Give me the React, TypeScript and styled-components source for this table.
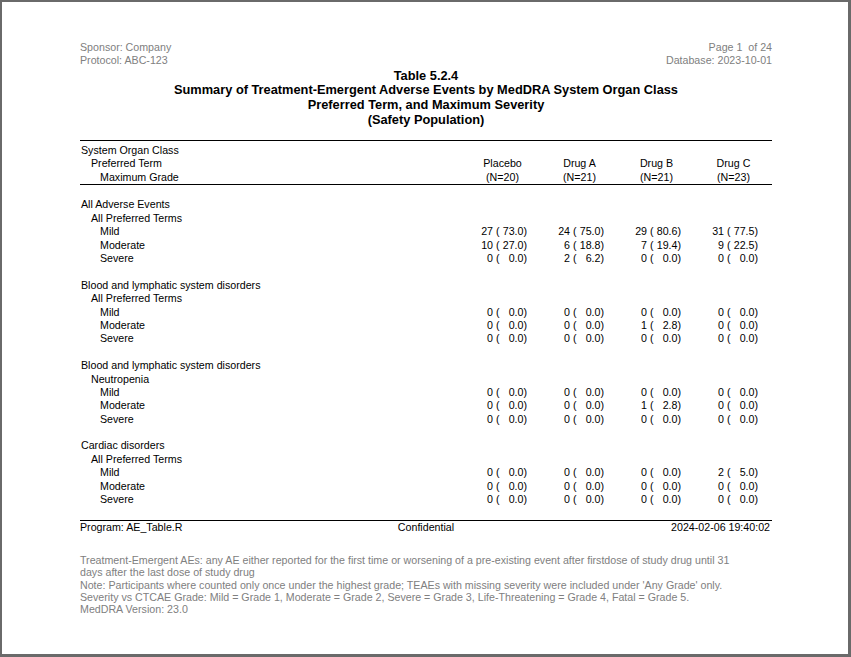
import styled, { createGlobalStyle } from "styled-components";

type Cell = [number, number];

interface GradeRow {
  grade: string;
  values: Cell[];
}

interface Group {
  soc: string;
  term: string;
  rows: GradeRow[];
}

const arms = [
  { name: "Placebo", n: 20 },
  { name: "Drug A", n: 21 },
  { name: "Drug B", n: 21 },
  { name: "Drug C", n: 23 },
];

const z: Cell = [0, 0];

const groups: Group[] = [
  {
    soc: "All Adverse Events",
    term: "All Preferred Terms",
    rows: [
      { grade: "Mild", values: [[27, 73.0], [24, 75.0], [29, 80.6], [31, 77.5]] },
      { grade: "Moderate", values: [[10, 27.0], [6, 18.8], [7, 19.4], [9, 22.5]] },
      { grade: "Severe", values: [z, [2, 6.2], z, z] },
    ],
  },
  {
    soc: "Blood and lymphatic system disorders",
    term: "All Preferred Terms",
    rows: [
      { grade: "Mild", values: [z, z, z, z] },
      { grade: "Moderate", values: [z, z, [1, 2.8], z] },
      { grade: "Severe", values: [z, z, z, z] },
    ],
  },
  {
    soc: "Blood and lymphatic system disorders",
    term: "Neutropenia",
    rows: [
      { grade: "Mild", values: [z, z, z, z] },
      { grade: "Moderate", values: [z, z, [1, 2.8], z] },
      { grade: "Severe", values: [z, z, z, z] },
    ],
  },
  {
    soc: "Cardiac disorders",
    term: "All Preferred Terms",
    rows: [
      { grade: "Mild", values: [z, z, z, [2, 5.0]] },
      { grade: "Moderate", values: [z, z, z, z] },
      { grade: "Severe", values: [z, z, z, z] },
    ],
  },
];

const footnotes = [
  "Treatment-Emergent AEs: any AE either reported for the first time or worsening of a pre-existing event after firstdose of study drug until 31 days after the last dose of study drug",
  "Note: Participants where counted only once under the highest grade; TEAEs with missing severity were included under 'Any Grade' only.",
  "Severity vs CTCAE Grade: Mild = Grade 1, Moderate = Grade 2, Severe = Grade 3, Life-Threatening = Grade 4, Fatal = Grade 5.",
  "MedDRA Version: 23.0",
];

// indent per level in the first column
const indents = [1, 11, 20];

const App = () => {
  return (
    <>
      <GlobalStyle />
      <Page>
        <TopBar>
          <div>
            <div>Sponsor: Company</div>
            <div>Protocol: ABC-123</div>
          </div>
          <RightText>
            <div>Page 1  of 24</div>
            <div>Database: 2023-10-01</div>
          </RightText>
        </TopBar>

        <Title>
          <div>Table 5.2.4</div>
          <div>Summary of Treatment-Emergent Adverse Events by MedDRA System Organ Class</div>
          <div>Preferred Term, and Maximum Severity</div>
          <div>(Safety Population)</div>
        </Title>

        <Table>
          <HeadRow>
            <HeadLabels>
              <Label $level={0}>System Organ Class</Label>
              <Label $level={1}>Preferred Term</Label>
              <Label $level={2}>Maximum Grade</Label>
            </HeadLabels>
            {arms.map((arm) => (
              <ArmHead key={arm.name}>
                <div>{arm.name}</div>
                <div>(N={arm.n})</div>
              </ArmHead>
            ))}
          </HeadRow>

          <Body>
            <Blank />
            {groups.map((g, gi) => (
              <div key={gi}>
                {gi > 0 && <Blank />}
                <Row>
                  <Label $level={0}>{g.soc}</Label>
                </Row>
                <Row>
                  <Label $level={1}>{g.term}</Label>
                </Row>
                {g.rows.map((r) => (
                  <Row key={r.grade}>
                    <Label $level={2}>{r.grade}</Label>
                    {r.values.map(([n, pct], i) => (
                      <Value key={i}>
                        <Count>{n}</Count>
                        <span> (</span>
                        <Pct>{pct.toFixed(1)}</Pct>
                        <span>)</span>
                      </Value>
                    ))}
                  </Row>
                ))}
              </div>
            ))}
            <Blank />
          </Body>

          <FootRow>
            <span>Program: AE_Table.R</span>
            <span>Confidential</span>
            <Stamp>2024-02-06 19:40:02</Stamp>
          </FootRow>
        </Table>

        <Notes>
          {footnotes.map((f) => (
            <div key={f}>{f}</div>
          ))}
        </Notes>
      </Page>
    </>
  );
};

export default App;

const GlobalStyle = createGlobalStyle`
html, body {
  margin: 0;
  padding: 0;
  background: #ffffff;
}
body {
  font-family: "Liberation Sans", Arial, sans-serif;
  font-size: 10.67px;
  color: #000;
}
`

const Page = styled.div`
width: 851px;
height: 657px;
box-sizing: border-box;
border-style: solid;
border-color: #6a6a6a;
border-width: 2px 3px 3px 2px;
padding: 38.5px 76px 0 78px;
background: #fff;
overflow: hidden;
`

const TopBar = styled.div`
display: flex;
justify-content: space-between;
color: #808080;
line-height: 13px;
white-space: pre;
`

const RightText = styled.div`
text-align: right;
white-space: pre;
`

const Title = styled.div`
margin-top: 2px;
text-align: center;
font-weight: bold;
font-size: 12.8px;
line-height: 14.7px;
`

const Table = styled.div`
margin-top: 13px;
border-top: 1px solid #000;
`

const HeadRow = styled.div`
display: grid;
grid-template-columns: 1fr repeat(4, 77px);
padding-top: 2.5px;
border-bottom: 1px solid #000;
line-height: 13.4px;
`

const HeadLabels = styled.div`
display: flex;
flex-direction: column;
`

const ArmHead = styled.div`
display: flex;
flex-direction: column;
justify-content: flex-end;
align-items: center;
`

const Body = styled.div`
line-height: 13.4px;
`

const Blank = styled.div`
height: 13.4px;
`

const Row = styled.div`
display: grid;
grid-template-columns: 1fr repeat(4, 77px);
height: 13.4px;
`

const Label = styled.div<{ $level: number }>`
padding-left: ${(p) => indents[p.$level]}px;
white-space: nowrap;
`

const Value = styled.div`
display: flex;
white-space: pre;
`

const Count = styled.span`
width: 29px;
text-align: right;
`

const Pct = styled.span`
width: 24px;
text-align: right;
`

const FootRow = styled.div`
display: grid;
grid-template-columns: 1fr auto 1fr;
border-top: 1px solid #000;
line-height: 13px;
`

const Stamp = styled.span`
text-align: right;
padding-right: 2px;
`

const Notes = styled.div`
width: 665px;
margin-top: 20.3px;
color: #808080;
line-height: 12.3px;
`
